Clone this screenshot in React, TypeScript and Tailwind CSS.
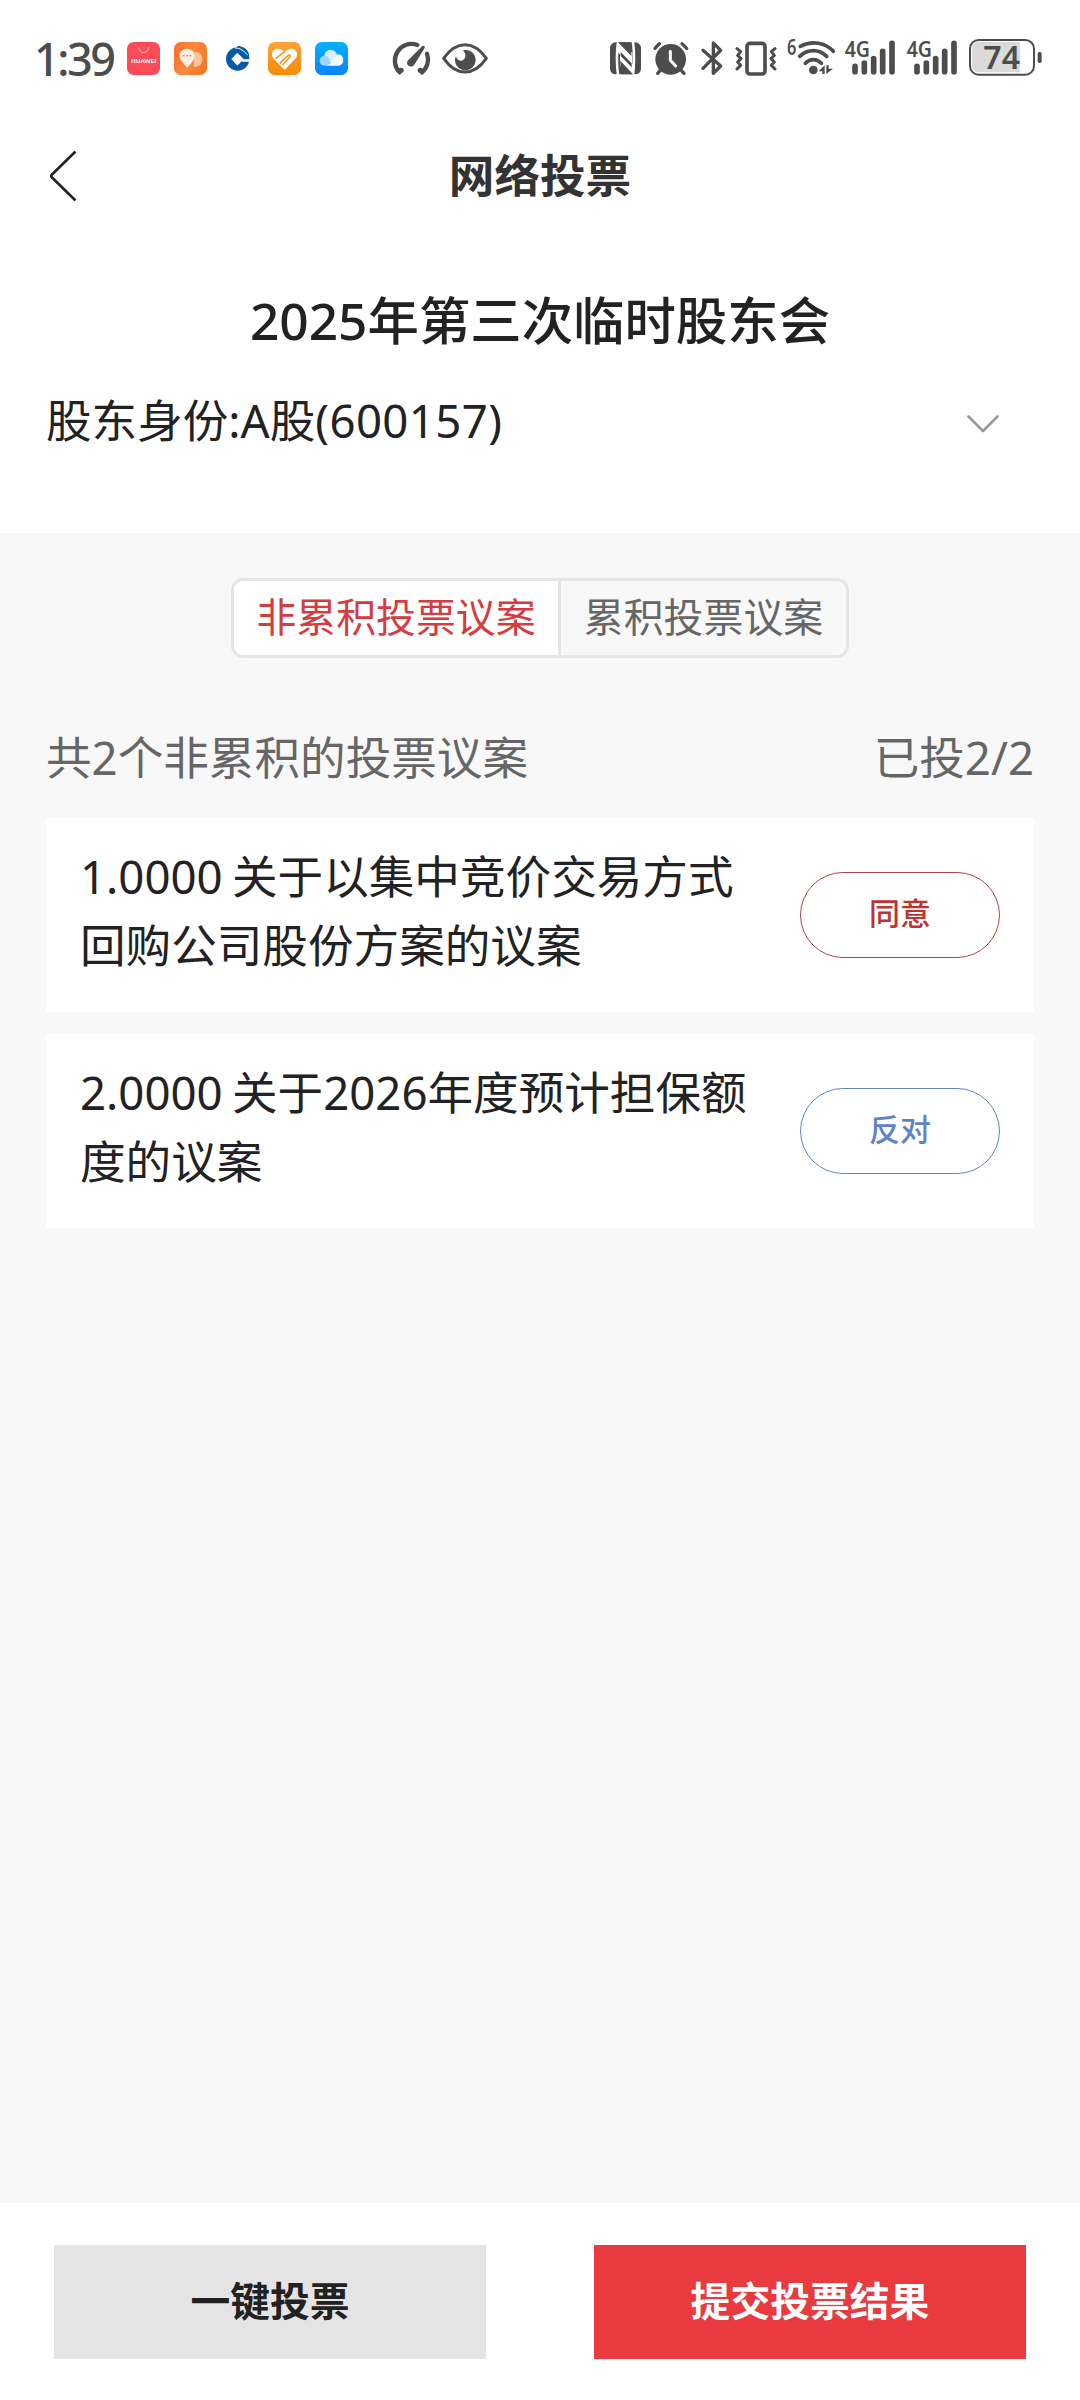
import type { ReactNode } from "react";
import { clsx } from "clsx";

interface Proposal {
  id: string;
  lines: readonly string[];
  vote: "agree" | "against";
}

const PROPOSALS: readonly Proposal[] = [
  { id: "1", lines: ["1.0000 关于以集中竞价交易方式", "回购公司股份方案的议案"], vote: "agree" },
  { id: "2", lines: ["2.0000 关于2026年度预计担保额", "度的议案"], vote: "against" },
];

const VOTE_LABEL = { agree: "同意", against: "反对" } as const;

interface GlyphProps {
  box: string;
  className: string;
  children: ReactNode;
}

// Status bar glyphs are drawn on a 3x grid, 132 units high.
function Glyph({ box, className, children }: GlyphProps) {
  return (
    <svg
      aria-hidden
      viewBox={box}
      className={clsx("h-[44px] shrink-0 overflow-visible text-[#4d4d4d]", className)}
      fill="none"
      strokeLinecap="round"
      strokeLinejoin="round"
    >
      {children}
    </svg>
  );
}

function AppIcons() {
  return (
    <Glyph box="315 48 675 132" className="w-[225px]">
      <defs>
        <linearGradient id="chat" x1="0" y1="0" x2="1" y2="0.4">
          <stop offset="0" stopColor="#f9702a" />
          <stop offset="0.6" stopColor="#fb8a3c" />
          <stop offset="1" stopColor="#f67a2c" />
        </linearGradient>
        <linearGradient id="health" x1="0" y1="0" x2="0" y2="1">
          <stop offset="0" stopColor="#fba43a" />
          <stop offset="1" stopColor="#fb8a04" />
        </linearGradient>
        <linearGradient id="cloud" x1="0" y1="0" x2="0" y2="1">
          <stop offset="0" stopColor="#05b1fd" />
          <stop offset="1" stopColor="#0a84fd" />
        </linearGradient>
      </defs>

      <rect x="321" y="66" width="99" height="99" rx="20" fill="#fd4c58" />
      <path d="M356 83c2 20 28 20 30 0" stroke="#ffc3c7" strokeWidth="3" />
      <text
        x="333"
        y="129"
        textLength="76"
        lengthAdjust="spacingAndGlyphs"
        fill="#fff"
        className="text-[16px] font-bold"
      >
        HUAWEI
      </text>

      <rect x="462" y="66" width="99" height="99" rx="20" fill="url(#chat)" />
      <path d="M523 96c14-2 24 8 24 22s-10 24-26 23z" fill="#fdc39a" />
      <path d="M501 86c14 0 23 9 23 21 0 16-14 24-22 37-8-13-23-21-23-37 0-12 9-21 22-21z" fill="#ffeee2" />
      <path d="M491 107h1M501 107h1M511 107h1" stroke="#f08a58" strokeWidth="5" />

      <circle cx="653" cy="117" r="35" fill="#075aa6" />
      <path d="M652 78c16-2 31 10 35 24v14h-18l-20-22z" fill="#075aa6" />
      <path d="M652 98l19 19-19 20-18-20z" fill="#fff" />
      <path d="M668 118h24v7h-26z" fill="#fff" />
      <path d="M646 84c16 0 24 8 36 20" stroke="#fff" strokeWidth="3" />

      <rect x="744" y="66" width="99" height="99" rx="20" fill="url(#health)" />
      <path
        d="M794 150l-32-33c-8-9-8-20-1-26 8-7 18-5 24-2l9 6c7-7 20-13 30-6 10 8 9 20 1 28z"
        fill="#fff"
      />
      <path
        d="M767 116l27-21M779 130l26-24c4-3 8 0 5 4l-22 26"
        stroke="#fb9820"
        strokeWidth="5"
        strokeLinecap="butt"
      />

      <rect x="885" y="66" width="99" height="99" rx="20" fill="url(#cloud)" />
      <circle cx="932" cy="108" r="19" fill="#d9efff" />
      <circle cx="914" cy="122" r="15" fill="#9fd6ff" />
      <path d="M918 137c8-3 13-9 19-18 7-10 12-17 20-16 8 1 13 9 13 18 0 9-6 16-15 16z" fill="#f2f9ff" />
    </Glyph>
  );
}

function SpeedIcon() {
  return (
    <Glyph box="90 48 123 132" className="ml-[40px] w-[41px]">
      <path d="M119 157A50 50 0 0 1 172 75" stroke="currentColor" strokeWidth="13" />
      <path d="M201 101A50 50 0 0 1 186 157" stroke="currentColor" strokeWidth="13" />
      <circle cx="123" cy="151" r="8" fill="currentColor" />
      <circle cx="181" cy="151" r="8" fill="currentColor" />
      <path d="M187 78c5-3 9 2 7 6l-31 50c-10 13-28 0-20-12z" fill="currentColor" />
    </Glyph>
  );
}

function EyeIcon() {
  return (
    <Glyph box="243 48 144 132" className="ml-[10px] w-[48px]">
      <path
        d="M251 115c18-26 39-41 64-41s46 15 64 41c-18 26-39 41-64 41s-46-15-64-41z"
        stroke="currentColor"
        strokeWidth="9"
      />
      <path
        d="M309 91c21-5 38 10 38 29 0 17-14 31-31 31s-31-14-31-31c0-4 1-8 3-11 2 9 8 14 16 13 13-2 17-18 5-31z"
        fill="currentColor"
      />
    </Glyph>
  );
}

function NfcIcon() {
  return (
    <Glyph box="60 48 93 132" className="w-[31px]">
      <rect x="60" y="67" width="93" height="96" rx="17" fill="currentColor" />
      <path
        d="M80 66c-4 30-4 65 0 98h8c-3-20-4-42-3-66l42 44V98L84 67zM133 164c4-30 4-65 0-98h-8c3 20 4 42 3 66L90 98v40l40 26z"
        fill="#fff"
      />
      <path d="M84 67h36c3 14 4 27 4 41zM129 163H95c-3-14-4-27-4-41zM92 96l33 34v12L92 108z" fill="currentColor" />
    </Glyph>
  );
}

function AlarmIcon() {
  return (
    <Glyph box="190 48 108 132" className="ml-[12px] w-[36px]">
      <circle cx="243" cy="118" r="46" fill="currentColor" />
      <path
        d="M196 85l13-14M277 71l14 14M212 151l-8 9M275 151l8 9"
        stroke="currentColor"
        strokeWidth="10"
      />
      <path d="M242 94v27l16 17" stroke="#fff" strokeWidth="9" />
    </Glyph>
  );
}

function BluetoothIcon() {
  return (
    <Glyph box="330 48 72 132" className="ml-[11px] w-[24px]">
      <path d="M339 91l53 47-22 22v-36M339 145l53-54-22-22v36" stroke="currentColor" strokeWidth="10" />
    </Glyph>
  );
}

function VibrateIcon() {
  return (
    <Glyph box="432 48 132 132" className="ml-[10px] w-[44px]">
      <rect x="471" y="70" width="54" height="92" rx="9" stroke="currentColor" strokeWidth="11" />
      <path
        d="M441 86l11 9-9 11 10 10-10 10 9 10-11 11M555 86l-11 9 9 11-10 10 10 10-9 10 11 11"
        stroke="currentColor"
        strokeWidth="9"
      />
    </Glyph>
  );
}

function WifiIcon() {
  return (
    <Glyph box="588 48 150 132" className="ml-[8px] w-[50px]">
      <text
        x="591"
        y="105"
        textLength="28"
        lengthAdjust="spacingAndGlyphs"
        fill="currentColor"
        className="text-[63px] font-semibold"
      >
        6
      </text>
      <path d="M631 79c34-18 75-12 99 15" stroke="currentColor" strokeWidth="11" />
      <path d="M629 109c24-23 58-23 81 0" stroke="currentColor" strokeWidth="11" />
      <path d="M646 130c14-15 34-15 48 0" stroke="currentColor" strokeWidth="11" />
      <circle cx="670" cy="150" r="13" fill="currentColor" />
      <path d="M704 136v26h-7v-8h-11zM709 162v-26h7v10h13z" fill="currentColor" />
    </Glyph>
  );
}

function SignalIcon({ className }: { className: string }) {
  return (
    <Glyph box="42 48 156 132" className={clsx("w-[52px]", className)}>
      <text
        x="44"
        y="110"
        textLength="76"
        lengthAdjust="spacingAndGlyphs"
        fill="currentColor"
        className="text-[62px] font-semibold"
      >
        4G
      </text>
      <path
        d="M75 139v16M103 129v26M131 116v39M158 94v61M186 70v85"
        stroke="currentColor"
        strokeWidth="17"
      />
    </Glyph>
  );
}

function BatteryIcon() {
  return (
    <Glyph box="414 48 225 132" className="ml-[10px] w-[75px]">
      <path d="M570 66H446c-12 0-20 8-20 20v51c0 12 8 20 20 20h124z" fill="#dadada" />
      <rect x="420" y="60" width="192" height="104" rx="26" stroke="currentColor" strokeWidth="6" />
      <rect x="623" y="96" width="12" height="33" rx="5" fill="currentColor" />
      <text
        x="460"
        y="147"
        textLength="110"
        lengthAdjust="spacingAndGlyphs"
        fill="currentColor"
        className="text-[95px] font-semibold"
      >
        74
      </text>
    </Glyph>
  );
}

function StatusBar() {
  return (
    <div className="flex h-[116px] shrink-0 items-center justify-between pl-[34px] pr-[37px]">
      <div className="flex items-center">
        <span className="w-[91px] text-[45px] font-medium leading-none tracking-[-2.500px] text-[#4d4d4d]">
          1:39
        </span>
        <AppIcons />
        <SpeedIcon />
        <EyeIcon />
      </div>
      <div className="flex items-center">
        <NfcIcon />
        <AlarmIcon />
        <BluetoothIcon />
        <VibrateIcon />
        <WifiIcon />
        <SignalIcon className="ml-[8px]" />
        <SignalIcon className="ml-[10px]" />
        <BatteryIcon />
      </div>
    </div>
  );
}

function VoteButton({ vote }: { vote: Proposal["vote"] }) {
  return (
    <button
      type="button"
      className={clsx(
        "flex h-[86px] w-[200px] shrink-0 items-center justify-center rounded-full border pb-[4px] text-[31px] font-medium leading-none",
        vote === "agree" ? "border-[#b04341] text-[#c0312f]" : "border-[#6286c0] text-[#5f84c6]",
      )}
    >
      {VOTE_LABEL[vote]}
    </button>
  );
}

export default function App() {
  return (
    <div className="flex h-[2400px] w-[1080px] flex-col bg-[#f8f8f8] font-['Noto_Sans','Noto_Sans_CJK_SC',sans-serif] text-[#222]">
      <header className="flex h-[533px] shrink-0 flex-col bg-white">
        <StatusBar />
        <div className="grid h-[120px] grid-cols-[100px_1fr_100px] items-center">
          <svg aria-hidden viewBox="0 0 28 52" className="ml-[49px] h-[52px] w-[28px]" fill="none">
            <path d="M26.5 1.5L3 24.5Q1.500 26 3 27.500L26.500 50.500" stroke="#222" strokeWidth="2.600" />
          </svg>
          <h1 className="text-center text-[45.600px] font-bold leading-none text-[#333]">网络投票</h1>
        </div>
        <h2 className="mt-[54px] text-center text-[51.400px] font-medium leading-[60px]">
          2025年第三次临时股东会
        </h2>
        <div className="mt-[40px] flex items-center justify-between pl-[46px] pr-[80px]">
          <span className="text-[45.600px] leading-[60px]">
            股东身份:A股<span className="tracking-[0.400px]">(600157)</span>
          </span>
          <svg aria-hidden viewBox="0 0 34 20" className="mt-[8px] h-[20px] w-[34px]" fill="none">
            <path
              d="M2.500 2.500L17 17L31.500 2.500"
              stroke="#999"
              strokeWidth="2.600"
              strokeLinecap="round"
              strokeLinejoin="round"
            />
          </svg>
        </div>
      </header>

      <main className="flex flex-1 flex-col px-[46px] pt-[45px]">
        <div className="flex h-[80px] self-center overflow-hidden rounded-xl border-[3px] border-[#e5e5e5] text-[39.900px]">
          <button type="button" className="w-[324px] bg-white pb-[2px] leading-none text-[#d43c40]">
            非累积投票议案
          </button>
          <button
            type="button"
            className="w-[288px] border-l-[3px] border-[#e5e5e5] pb-[2px] leading-none text-[#666]"
          >
            累积投票议案
          </button>
        </div>

        <div className="mt-[69px] flex justify-between text-[45.600px] leading-[60px] text-[#666]">
          <span>共2个非累积的投票议案</span>
          <span>已投2/2</span>
        </div>

        <ul className="mt-[31px] flex flex-col gap-[22px]">
          {PROPOSALS.map((p) => (
            <li key={p.id} className="flex h-[194px] items-center justify-between bg-white px-[34px]">
              <p className="pb-[9px] text-[45.600px] leading-[68.400px] [word-spacing:-2.500px] whitespace-nowrap">
                {p.lines.map((line) => (
                  <span key={line} className="block">
                    {line}
                  </span>
                ))}
              </p>
              <VoteButton vote={p.vote} />
            </li>
          ))}
        </ul>
      </main>

      <footer className="flex h-[197px] shrink-0 justify-between bg-white px-[54px] pt-[42px] text-[39.800px] font-bold leading-none">
        <button type="button" className="h-[114px] w-[432px] bg-[#e4e4e4] pb-[3px]">
          一键投票
        </button>
        <button type="button" className="h-[114px] w-[432px] bg-[#e83a3f] pb-[3px] text-white">
          提交投票结果
        </button>
      </footer>
    </div>
  );
}
